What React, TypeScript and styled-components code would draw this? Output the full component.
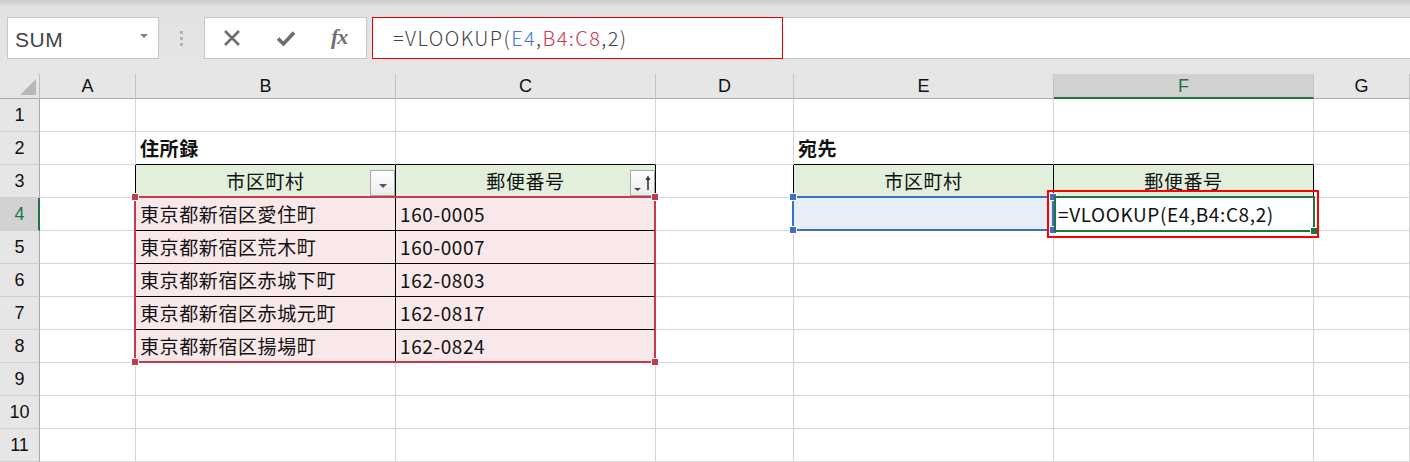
import React, { FC } from 'react';
import styled, { createGlobalStyle } from 'styled-components';

const GlobalStyle = createGlobalStyle`
  html, body {
    margin: 0;
    padding: 0;
    background: #fff;
    overflow: hidden;
  }
  body {
    font-family: "Noto Sans CJK JP", "Liberation Sans", sans-serif;
  }
`;

const JP = '"Noto Sans CJK JP", "Liberation Sans", sans-serif';
const LATIN = '"Liberation Sans", Arial, sans-serif';
const GREEN = '#217346';
const GRID = '#d4d4d4';

const StyledPage = styled.div`
  width: 1410px;
  height: 462px;
  overflow: hidden;
  background: #e6e6e6;
`;

// ---- formula toolbar ----
const StyledTopBar = styled.div`
  height: 74px;
  box-sizing: border-box;
  padding: 17px 0 0 7px;
  display: flex;
  align-items: flex-start;
  background: linear-gradient(#c9c9c9 0, #e2e2e2 7px, #e6e6e6 100%);
`;

const StyledNameBox = styled.div`
  width: 152px;
  height: 42px;
  box-sizing: border-box;
  border: 1px solid #c6c6c6;
  background: #fff;
  display: flex;
  align-items: center;
  justify-content: space-between;
  padding: 4px 10px 0 7px;
  font: 21px ${LATIN};
  letter-spacing: 0.5px;
  color: #444;
`;

const StyledCaret = styled.span`
  width: 0;
  height: 0;
  margin-top: -9px;
  border-left: 4px solid transparent;
  border-right: 4px solid transparent;
  border-top: 4px solid #808080;
`;

const StyledGrip = styled.div`
  width: 45px;
  height: 42px;
  display: flex;
  flex-direction: column;
  align-items: center;
  justify-content: center;
  gap: 3px;
`;

const StyledGripDot = styled.span`
  width: 3px;
  height: 3px;
  background: #b3b3b3;
`;

const StyledButtonGroup = styled.div`
  width: 163px;
  height: 42px;
  box-sizing: border-box;
  border: 1px solid #c6c6c6;
  background: #fff;
  display: flex;
`;

const StyledIconButton = styled.div`
  flex: 1;
  display: flex;
  align-items: center;
  justify-content: center;
  color: #6e6e6e;
`;

const StyledFx = styled.span`
  font: italic bold 22px "Liberation Serif", "Times New Roman", serif;
  color: #707070;
  letter-spacing: -1px;
  margin-top: -2px;
`;

const StyledFormulaBar = styled.div`
  flex: 1;
  height: 42px;
  margin-left: 5px;
  box-sizing: border-box;
  border: 1px solid #c6c6c6;
  border-right: none;
  background: #fff;
  position: relative;
  display: flex;
  align-items: center;
  padding: 0 0 2px 20px;
  font: 300 20px ${JP};
  letter-spacing: 1.4px;
  color: #444;
  white-space: nowrap;
`;

const StyledBarFrame = styled.div`
  position: absolute;
  left: -1px;
  top: -1px;
  width: 411px;
  height: 42px;
  box-sizing: border-box;
  border: 1px solid #ee0000;
`;

const StyledRef = styled.span<{ $color: string }>`
  color: ${(p) => p.$color};
`;

// ---- sheet grid ----
const StyledSheet = styled.div`
  display: grid;
  grid-template-columns: 40px 96px 260px 260px 138px 260px 260px 1fr;
  grid-template-rows: 25px repeat(11, 33px);
  background: #fff;
`;

const StyledCorner = styled.div`
  grid-row: 1;
  grid-column: 1;
  background: #e6e6e6;
  border-right: 1px solid #bdbdbd;
  border-bottom: 1px solid #ababab;
  display: flex;
  align-items: flex-end;
  justify-content: flex-end;
  padding: 0 3px 3px 0;
`;

const StyledCornerMark = styled.span`
  width: 0;
  height: 0;
  border-left: 16px solid transparent;
  border-bottom: 16px solid #b8b8b8;
`;

const StyledColHead = styled.div<{ $c: number; $active?: boolean }>`
  grid-row: 1;
  grid-column: ${(p) => p.$c};
  display: flex;
  align-items: center;
  justify-content: center;
  background: ${(p) => (p.$active ? '#d2d2d2' : '#e6e6e6')};
  color: ${(p) => (p.$active ? GREEN : '#111')};
  border-right: 1px solid #c3c3c3;
  border-bottom: ${(p) => (p.$active ? `2px solid ${GREEN}` : '1px solid #ababab')};
  font: 18px ${LATIN};
  padding-top: ${(p) => (p.$active ? 1 : 0)}px;
`;

const StyledRowHead = styled.div<{ $r: number; $active?: boolean }>`
  grid-row: ${(p) => p.$r};
  grid-column: 1;
  display: flex;
  align-items: center;
  justify-content: center;
  background: ${(p) => (p.$active ? '#d2d2d2' : '#e6e6e6')};
  color: ${(p) => (p.$active ? GREEN : '#111')};
  border-right: ${(p) => (p.$active ? `2px solid ${GREEN}` : '1px solid #a9a9a9')};
  border-bottom: 1px solid #d0d0d0;
  font: 18px ${LATIN};
  padding-left: ${(p) => (p.$active ? 1 : 0)}px;
`;

const StyledCell = styled.div<{
  $r: number;
  $c: number;
  $bg?: string;
  $rb?: string;
  $bb?: string;
  $bold?: boolean;
  $center?: boolean;
}>`
  grid-row: ${(p) => p.$r};
  grid-column: ${(p) => p.$c};
  position: relative;
  display: flex;
  align-items: center;
  justify-content: ${(p) => (p.$center ? 'center' : 'flex-start')};
  padding: 0 4px 2px;
  background: ${(p) => p.$bg || '#fff'};
  border-right: 1px solid ${(p) => p.$rb || GRID};
  border-bottom: 1px solid ${(p) => p.$bb || GRID};
  font: ${(p) => (p.$bold ? 'bold ' : '')}19px ${JP};
  letter-spacing: 0.6px;
  color: #111;
  white-space: nowrap;
`;

const StyledFilterButton = styled.div`
  position: absolute;
  right: 0;
  top: 5px;
  width: 25px;
  height: 26px;
  box-sizing: border-box;
  border: 1px solid #a9a9a9;
  background: linear-gradient(#ffffff, #ececec);
`;

// overlays placed on the same grid areas as the cells they mark
const StyledRange = styled.div<{
  $rows: string;
  $cols: string;
  $color: string;
  $width: number;
  $margin: string;
}>`
  grid-row: ${(p) => p.$rows};
  grid-column: ${(p) => p.$cols};
  margin: ${(p) => p.$margin};
  position: relative;
  z-index: 2;
  pointer-events: none;
  border: ${(p) => p.$width}px solid ${(p) => p.$color};
`;

const StyledHandle = styled.span<{ $color: string; $x: 'left' | 'right'; $y: 'top' | 'bottom' }>`
  position: absolute;
  ${(p) => p.$x}: -4px;
  ${(p) => p.$y}: -4px;
  width: 6px;
  height: 6px;
  background: ${(p) => p.$color};
  outline: 1px solid #fff;
`;

const COLS = ['A', 'B', 'C', 'D', 'E', 'F', 'G'];

const ADDRESSES: [string, string][] = [
  ['東京都新宿区愛住町', '160-0005'],
  ['東京都新宿区荒木町', '160-0007'],
  ['東京都新宿区赤城下町', '162-0803'],
  ['東京都新宿区赤城元町', '162-0817'],
  ['東京都新宿区揚場町', '162-0824'],
];

type CellSpec = {
  text?: string;
  bg?: string;
  rb?: string;
  bb?: string;
  bold?: boolean;
  center?: boolean;
  filter?: 'plain' | 'sort';
};

const HEAD_BG = '#e2efda';
const PINK = '#f9e8e9';
const BLACK = '#000';

function cellSpec(col: string, row: number): CellSpec {
  if (row === 2 && col === 'B') return { text: '住所録', bold: true, bb: BLACK };
  if (row === 2 && col === 'C') return { bb: BLACK };
  if (row === 2 && col === 'E') return { text: '宛先', bold: true, bb: BLACK };
  if (row === 2 && col === 'F') return { bb: BLACK };
  if (row === 3) {
    if (col === 'A' || col === 'D') return { rb: BLACK };
    if (col === 'B') return { text: '市区町村', bg: HEAD_BG, center: true, rb: BLACK, bb: BLACK, filter: 'plain' };
    if (col === 'C') return { text: '郵便番号', bg: HEAD_BG, center: true, rb: BLACK, bb: BLACK, filter: 'sort' };
    if (col === 'E') return { text: '市区町村', bg: HEAD_BG, center: true, rb: BLACK, bb: BLACK };
    if (col === 'F') return { text: '郵便番号', bg: HEAD_BG, center: true, rb: BLACK, bb: BLACK };
  }
  if (row >= 4 && row <= 8) {
    const [addr, zip] = ADDRESSES[row - 4];
    if (col === 'B') return { text: addr, bg: PINK, rb: BLACK, bb: BLACK };
    if (col === 'C') return { text: zip, bg: PINK, rb: BLACK, bb: BLACK };
  }
  if (row === 4 && col === 'E') return { bg: '#e8eef8' };
  if (row === 4 && col === 'F') return { text: '=VLOOKUP(E4,B4:C8,2)' };
  return {};
}

const FilterIcon: FC<{ sort?: boolean }> = ({ sort }) => (
  <svg width="23" height="24" viewBox="0 0 23 24">
    {sort ? (
      <>
        <polygon points="3,17 10,17 6.5,20" fill="#444" />
        <line x1="17" y1="6" x2="17" y2="19" stroke="#333" strokeWidth="1.6" />
        <polygon points="14.5,9 17,4.5 19.5,9" fill="#333" />
      </>
    ) : (
      <polygon points="8,13 16,13 12,17" fill="#555" />
    )}
  </svg>
);

const Corners: FC<{ color: string }> = ({ color }) => (
  <>
    <StyledHandle $color={color} $x="left" $y="top" />
    <StyledHandle $color={color} $x="right" $y="top" />
    <StyledHandle $color={color} $x="left" $y="bottom" />
    <StyledHandle $color={color} $x="right" $y="bottom" />
  </>
);

const FormulaToolbar: FC = () => (
  <StyledTopBar>
    <StyledNameBox>
      SUM
      <StyledCaret />
    </StyledNameBox>
    <StyledGrip>
      <StyledGripDot />
      <StyledGripDot />
      <StyledGripDot />
    </StyledGrip>
    <StyledButtonGroup>
      <StyledIconButton>
        <svg width="18" height="16" viewBox="0 0 18 16">
          <path d="M2 1 L16 15 M16 1 L2 15" stroke="currentColor" strokeWidth="2.6" />
        </svg>
      </StyledIconButton>
      <StyledIconButton>
        <svg width="20" height="17" viewBox="0 0 20 17">
          <path d="M2 8.5 L7.5 14 L18 2.5" stroke="currentColor" strokeWidth="3.6" fill="none" />
        </svg>
      </StyledIconButton>
      <StyledIconButton>
        <StyledFx>fx</StyledFx>
      </StyledIconButton>
    </StyledButtonGroup>
    <StyledFormulaBar>
      =VLOOKUP(
      <StyledRef $color="#3f7bd6">E4</StyledRef>,
      <StyledRef $color="#c73a58">B4:C8</StyledRef>,2)
      <StyledBarFrame />
    </StyledFormulaBar>
  </StyledTopBar>
);

const Sheet: FC = () => {
  const rows = Array.from({ length: 11 }, (_, i) => i + 1);
  return (
    <StyledSheet>
      <StyledCorner>
        <StyledCornerMark />
      </StyledCorner>
      {COLS.map((c, i) => (
        <StyledColHead key={c} $c={i + 2} $active={c === 'F'}>
          {c}
        </StyledColHead>
      ))}
      {rows.map((r) => (
        <React.Fragment key={r}>
          <StyledRowHead $r={r + 1} $active={r === 4}>
            {r}
          </StyledRowHead>
          {COLS.map((c, i) => {
            const s = cellSpec(c, r);
            return (
              <StyledCell
                key={c}
                $r={r + 1}
                $c={i + 2}
                $bg={s.bg}
                $rb={s.rb}
                $bb={s.bb}
                $bold={s.bold}
                $center={s.center}
              >
                {s.text}
                {s.filter && (
                  <StyledFilterButton>
                    <FilterIcon sort={s.filter === 'sort'} />
                  </StyledFilterButton>
                )}
              </StyledCell>
            );
          })}
        </React.Fragment>
      ))}

      {/* B4:C8 reference range */}
      <StyledRange $rows="5 / 10" $cols="3 / 5" $color="#c43b4c" $width={2} $margin="-2px 0 0 -2px">
        <Corners color="#c43b4c" />
      </StyledRange>
      {/* E4 reference */}
      <StyledRange $rows="5" $cols="6" $color="#3d6fc8" $width={2} $margin="-2px 0 0 -2px">
        <Corners color="#3d6fc8" />
      </StyledRange>
      {/* active cell F4 */}
      <StyledRange $rows="5" $cols="7" $color={GREEN} $width={2} $margin="-2px -1px -1px 0">
        <StyledHandle $color={GREEN} $x="right" $y="bottom" />
      </StyledRange>
      {/* annotation */}
      <StyledRange $rows="5" $cols="7" $color="#ff0000" $width={2} $margin="-8px -5px -7px -7px" />
    </StyledSheet>
  );
};

export default function App() {
  return (
    <StyledPage>
      <GlobalStyle />
      <FormulaToolbar />
      <Sheet />
    </StyledPage>
  );
}
